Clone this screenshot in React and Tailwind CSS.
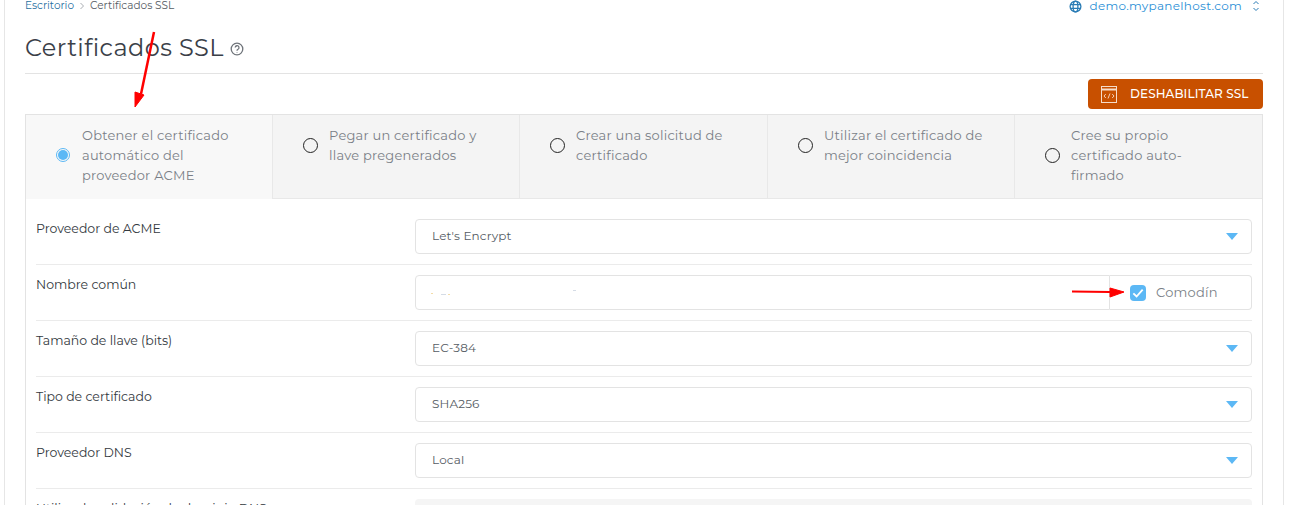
const tabs = [
  { label: ['Obtener el certificado', 'automático del', 'proveedor ACME'], active: true },
  { label: ['Pegar un certificado y', 'llave pregenerados'] },
  { label: ['Crear una solicitud de', 'certificado'] },
  { label: ['Utilizar el certificado de', 'mejor coincidencia'] },
  { label: ['Cree su propio', 'certificado auto-', 'firmado'] },
]

const font = { fontFamily: 'Montserrat, Inter, "Liberation Sans", sans-serif' }

const Row = ({ label, children }) => (
  <div className="flex h-14 border-b border-[#ebebeb] pt-[10px]">
    <div className="w-[379px] shrink-0 text-[12.5px] leading-5 text-[#333940]">{label}</div>
    <div className="flex-1">{children}</div>
  </div>
)

const Select = ({ value }) => (
  <div className="flex h-[35px] items-center justify-between rounded border border-[#e3e3e3] bg-white pl-4 pr-[13px] text-xs tracking-[0.15px] text-[#555b63]">
    <span className="pb-[2px]">{value}</span>
    <span className="h-0 w-0 border-x-[6.5px] border-t-[7px] border-x-transparent border-t-[#5cb8f5]" />
  </div>
)

export default function App() {
  return (
    <div style={font} className="relative h-[505px] overflow-hidden bg-white">
      <div className="mx-[4px] h-full w-[1280px] border-x border-[#e6e6e6] px-5">
        {/* Breadcrumb */}
        <div className="flex h-3 items-center justify-between text-[10.5px] leading-3">
          <div className="flex items-center gap-[5px]">
            <span className="text-[#1f6f9f]">Escritorio</span>
            <svg width="6" height="8" viewBox="0 0 6 8" fill="none" stroke="#a9adb2"><path d="M1.5 1l3 3-3 3" /></svg>
            <span className="text-[#555b63]">Certificados SSL</span>
          </div>
          <div className="mr-[3px] flex items-center text-xs leading-3 tracking-[0.3px] text-[#2b8fd6]">
            <svg width="13" height="13" viewBox="0 0 14 14" fill="none" stroke="#2a7cb5" strokeWidth="1.4" className="mr-[7px]">
              <circle cx="7" cy="7" r="5.8" />
              <ellipse cx="7" cy="7" rx="2.6" ry="5.8" />
              <path d="M1.5 5h11M1.5 9h11" />
            </svg>
            <span>demo.mypanelhost.com</span>
            <svg width="8" height="12" viewBox="0 0 8 12" fill="none" stroke="#2a7cb5" className="ml-[10px]"><path d="M1.5 4L4 1.5 6.5 4M1.5 8L4 10.5 6.5 8" /></svg>
          </div>
        </div>

        {/* Title */}
        <div className="mt-[22px] flex h-[40px] items-start border-b border-[#e3e3e3]">
          <h1 className="text-2xl leading-7 tracking-[0.4px] text-[#3a4048]">Certificados SSL</h1>
          <svg width="14" height="14" viewBox="0 0 14 14" fill="none" stroke="#6f747a" strokeWidth="1.3" className="ml-[6px] mt-2">
            <circle cx="7" cy="7" r="5.8" />
            <path d="M5.2 5.6a1.9 1.9 0 1 1 2.8 1.7c-.6.3-1 .7-1 1.4M7 10v.6" />
          </svg>
        </div>

        {/* Button */}
        <div className="mt-[5px] flex justify-end">
          <button className="flex h-[30px] w-[175px] items-center rounded bg-[#c85000] pl-[13px] text-xs font-medium tracking-[0.1px] text-white">
            <svg width="16" height="17" viewBox="0 0 16 17" fill="none" stroke="#f6dcc9" className="mr-[13px]">
              <rect x="0.5" y="0.5" width="15" height="16" />
              <path d="M.5 3.5h15" strokeWidth="2" />
              <path d="M4.8 8L3 10l1.8 2M11.2 8L13 10l-1.8 2M9 7.5l-2 5" strokeWidth="0.9" />
            </svg>
            DESHABILITAR SSL
          </button>
        </div>

        {/* Panel */}
        <div className="mt-[5px] w-[1238px] border border-[#e3e3e3]">
          <div className="grid h-[84px] grid-cols-[246px_247px_248px_247px_1fr]">
            {tabs.map((tab, i) => (
              <div
                key={i}
                className={`flex items-start pl-[30px] pr-4 pt-[10px] ${tab.active ? 'bg-[#f8f8f8]' : 'border-b border-l border-[#e8e8e8] bg-[#f4f4f4]'}`}
              >
                <div className="flex items-center">
                  {tab.active ? (
                    <span className="mr-[12px] flex h-[14px] w-[14px] shrink-0 items-center justify-center rounded-full border border-[#5cb8f5]">
                      <span className="h-[10px] w-[10px] rounded-full bg-[#5cb8f5]" />
                    </span>
                  ) : (
                    <span className="mr-[11px] h-[15px] w-[15px] shrink-0 rounded-full border-[1.5px] border-[#222]" />
                  )}
                  <div className="text-[13px] leading-5 tracking-[0.22px] text-[#7a7f87]">
                    {tab.label.map(l => <div key={l}>{l}</div>)}
                  </div>
                </div>
              </div>
            ))}
          </div>

          <div className="px-[10px] pt-[10px]">
            <Row label="Proveedor de ACME"><Select value="Let's Encrypt" /></Row>
            <Row label="Nombre común">
              <div className="flex h-[35px]">
                <div className="flex-1 rounded-l border border-[#e3e3e3] pl-[14px] pt-[13px]">
                  {/* what is left of the blurred-out domain */}
                  <svg width="150" height="8" viewBox="0 0 150 8">
                    <rect x="1" y="4" width="2" height="1" fill="#f3dca8" />
                    <rect x="11" y="5" width="5" height="1" fill="#d5dce6" />
                    <rect x="18" y="5" width="2" height="1" fill="#f3dca8" />
                    <rect x="143" y="1" width="3" height="1" fill="#d5dce6" />
                  </svg>
                </div>
                <div className="flex w-[142px] items-center rounded-r border border-l-0 border-[#e3e3e3] pl-[20px] text-[13px] tracking-[0.22px] text-[#7a7f87]">
                  <span className="mr-[10px] flex h-4 w-4 items-center justify-center rounded-[4px] bg-[#5cb8f5]">
                    <svg width="14" height="14" viewBox="0 0 12 12" fill="none" stroke="#fff" strokeWidth="1.6"><path d="M2 6.3l2.8 2.7L10 3.2" /></svg>
                  </span>
                  Comodín
                </div>
              </div>
            </Row>
            <Row label="Tamaño de llave (bits)"><Select value="EC-384" /></Row>
            <Row label="Tipo de certificado"><Select value="SHA256" /></Row>
            <Row label="Proveedor DNS"><Select value="Local" /></Row>
            <Row label="Utilizar la validación de dominio DNS">
              <div className="h-[35px] rounded bg-[#f5f5f5]" />
            </Row>
          </div>
        </div>
      </div>

      {/* Red annotation arrows */}
      <svg width="1304" height="505" className="pointer-events-none absolute left-0 top-0" fill="#f00" stroke="#f00">
        <path d="M154 32L141 94" strokeWidth="2.5" fill="none" />
        <path d="M135 92l9 3-9 12z" />
        <path d="M1072 291.5L1110 292" strokeWidth="2.2" fill="none" />
        <path d="M1110 288l14 4-14 5z" />
      </svg>
    </div>
  )
}
